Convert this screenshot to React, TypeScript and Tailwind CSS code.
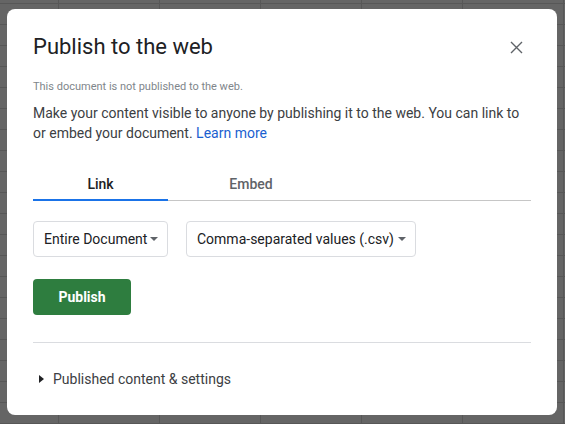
import React from 'react';

const Caret: React.FC = () => (
  <svg width="8" height="4" viewBox="0 0 8 4" className="shrink-0">
    <path d="M0 0 L8 0 L4 4 Z" fill="#5f6368" />
  </svg>
);

const Select: React.FC<{ label: string; width: string }> = ({ label, width }) => (
  <div
    className={`flex items-center justify-between h-[36px] ${width} pl-[10px] pr-[9px] border border-[#dadce0] rounded-[4px] text-[14px] text-[#202124]`}
  >
    <span>{label}</span>
    <Caret />
  </div>
);

export default function App() {
  return (
    <div
      className="h-[424px] w-[565px] overflow-hidden bg-[#656565] bg-[linear-gradient(to_right,#575757_1px,transparent_1px),linear-gradient(to_bottom,#575757_1px,transparent_1px)] bg-[size:101px_21px] bg-[position:58px_3px] pt-[9px] pl-[7px]"
      style={{ fontFamily: 'Roboto, "Liberation Sans", Arial, sans-serif' }}
    >
      <div className="w-[550px] h-[406px] bg-white rounded-[8px] px-[26px] pt-[24px]">
        <div className="flex items-center justify-between">
          <h1 className="text-[22px] leading-[28px] text-[#202124] font-normal">Publish to the web</h1>
          <button className="w-[24px] h-[24px] mr-[3px] flex items-center justify-center">
            <svg width="13" height="13" viewBox="0 0 13 13">
              <path d="M1 1 L12 12 M12 1 L1 12" stroke="#5f6368" strokeWidth="1.4" />
            </svg>
          </button>
        </div>

        <p className="mt-[18px] text-[11px] leading-[16px] text-[#80868b]">
          This document is not published to the web.
        </p>
        <p className="mt-[8px] text-[14px] leading-[20px] text-[#3c4043]">
          Make your content visible to anyone by publishing it to the web. You can link to or
          embed your document. <span className="text-[#1a5fd0]">Learn more</span>
        </p>

        <div className="mt-[26px] flex border-b border-[#c6c6c6]">
          <div className="w-[135px] text-center pt-[5px] pb-[5px] -mb-px border-b-2 border-[#1a73e8] text-[14px] leading-[20px] font-medium text-[#202124]">
            Link
          </div>
          <div className="w-[166px] text-center pt-[5px] pb-[6px] text-[14px] leading-[20px] font-medium text-[#5f6368]">
            Embed
          </div>
        </div>

        <div className="mt-[20px] flex gap-[18px]">
          <Select label="Entire Document" width="w-[135px]" />
          <Select label="Comma-separated values (.csv)" width="w-[230px]" />
        </div>

        <button className="mt-[22px] w-[98px] h-[36px] rounded-[4px] bg-[#2e7d3f] text-white text-[14px] font-bold">
          Publish
        </button>

        <div className="mt-[27px] h-px bg-[#dadce0]" />

        <div className="mt-[26px] flex items-center pl-[6px] text-[14px] leading-[20px] text-[#3c4043]">
          <svg width="5" height="8" viewBox="0 0 5 8" className="mr-[9px]">
            <path d="M0 0 L5 4 L0 8 Z" fill="#202124" />
          </svg>
          Published content &amp; settings
        </div>
      </div>
    </div>
  );
}
